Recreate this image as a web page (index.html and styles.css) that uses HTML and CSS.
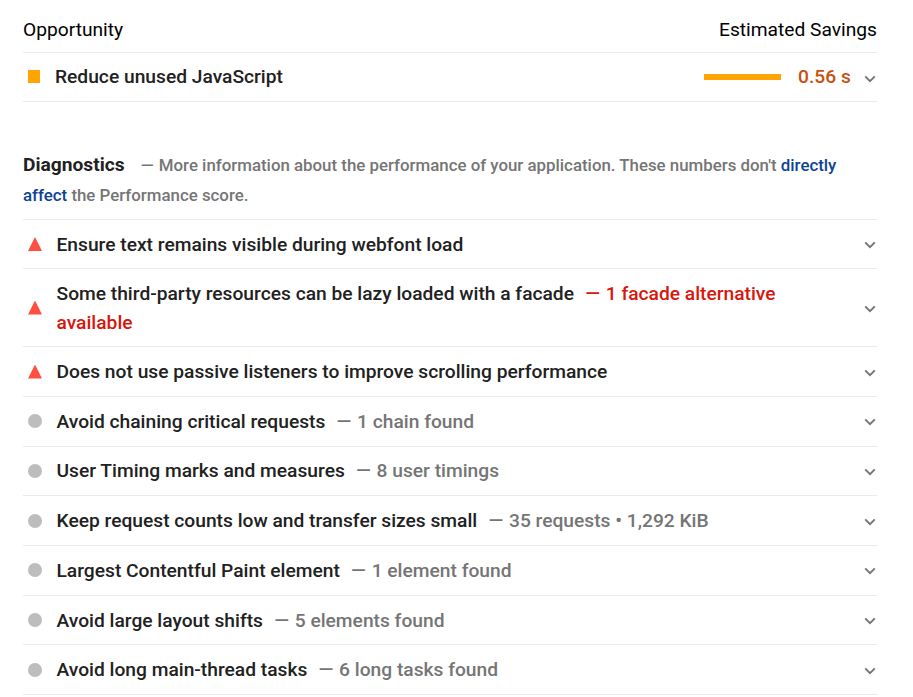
FILE: index.html
```html
<!DOCTYPE html>
<html lang="en">
<head>
<meta charset="utf-8">
<title>Performance audits</title>
<link rel="stylesheet" href="styles.css">
</head>
<body>
<svg class="defs"><symbol id="chev" viewBox="0 0 12 8"><path d="M1.2 1.4 6 6.2l4.8-4.8" fill="none" stroke="currentColor" stroke-width="1.9"/></symbol></svg>
<main class="report">
<div class="header"><span>Opportunity</span><span>Estimated Savings</span></div>
<div class="row opportunity"><i class="mark square"></i><div class="title"><span>Reduce unused JavaScript</span></div><span class="bar"></span><span class="saving">0.56 s</span><svg class="chev"><use href="#chev"/></svg></div>
<div class="intro"><div><span class="heading">Diagnostics</span><span class="desc"><span class="dash">—</span> More information about the performance of your application. These numbers don't <a>directly</a></span></div><div class="desc"><a>affect</a> the Performance score.</div></div>
<div class="row r1"><i class="mark triangle"></i><div class="title"><span>Ensure text remains visible during webfont load</span></div><svg class="chev"><use href="#chev"/></svg></div>
<div class="row r2"><i class="mark triangle"></i><div class="title"><span>Some third-party resources can be lazy loaded with a facade</span><span class="detail fail"><span class="dash">—</span> 1 facade alternative<br>available</span></div><svg class="chev"><use href="#chev"/></svg></div>
<div class="row r3"><i class="mark triangle"></i><div class="title"><span>Does not use passive listeners to improve scrolling performance</span></div><svg class="chev"><use href="#chev"/></svg></div>
<div class="row"><i class="mark circle"></i><div class="title"><span>Avoid chaining critical requests</span><span class="detail"><span class="dash">—</span> 1 chain found</span></div><svg class="chev"><use href="#chev"/></svg></div>
<div class="row timing"><i class="mark circle"></i><div class="title"><span>User Timing marks and measures</span><span class="detail"><span class="dash">—</span> 8 user timings</span></div><svg class="chev"><use href="#chev"/></svg></div>
<div class="row"><i class="mark circle"></i><div class="title"><span>Keep request counts low and transfer sizes small</span><span class="detail"><span class="dash">—</span> 35 requests • 1,292 KiB</span></div><svg class="chev"><use href="#chev"/></svg></div>
<div class="row"><i class="mark circle"></i><div class="title"><span>Largest Contentful Paint element</span><span class="detail"><span class="dash">—</span> 1 element found</span></div><svg class="chev"><use href="#chev"/></svg></div>
<div class="row"><i class="mark circle"></i><div class="title"><span>Avoid large layout shifts</span><span class="detail"><span class="dash">—</span> 5 elements found</span></div><svg class="chev"><use href="#chev"/></svg></div>
<div class="row"><i class="mark circle"></i><div class="title"><span>Avoid long main-thread tasks</span><span class="detail"><span class="dash">—</span> 6 long tasks found</span></div><svg class="chev"><use href="#chev"/></svg></div>
</main>
</body>
</html>
```
FILE: styles.css
```css
* { box-sizing: border-box; }
body { margin: 0; background: #fff; color: #212121; font-family: Roboto, sans-serif; overflow: hidden; }
.defs { display: none; }
.report { padding: 0 36px 0 23px; }
.header { height: 53px; padding-top: 7px; display: flex; justify-content: space-between; align-items: center; font-size: 19.2px; color: #000; border-bottom: 1px solid #ebebeb; }
.row { height: 49.7px; display: flex; align-items: center; border-bottom: 1px solid #ebebeb; font-size: 19.22px; font-weight: 500; line-height: 29px; }
.opportunity { height: 49px; }
.r1 { height: 49px; }
.r2 { height: 78px; }
.r3 { height: 50px; }
.title { flex: 1; white-space: nowrap; padding-top: 0.4px; }
.r1 .title, .r2 .title { padding-top: 1px; }
.r3 .title { padding-top: 0; }
.timing .title { padding: 0 0 0.8px; }
.opportunity .title, .opportunity .saving { padding: 0 0 1px; }
.mark { flex: none; margin: 0 14.5px 0 5px; }
.square { width: 12px; height: 13px; margin: 0 15px 1px 5px; background: #ffa400; }
.triangle { width: 14px; height: 14px; background: #ff4e42; clip-path: polygon(50% 0, 100% 100%, 0 100%); }
.circle { width: 14px; height: 14px; border-radius: 50%; background: #bdbdbd; }
.chev { flex: none; width: 12px; height: 8px; margin: 2px 1px 0 0; color: #757575; }
.opportunity .chev { margin-top: 3px; }
.bar { width: 77px; height: 6px; background: #ffa400; }
.saving { margin: 0 13.2px 0 17px; color: #c7500f; }
.detail { margin-left: 11.2px; color: #757575; }
.fail { color: #d9160c; }
.dash { margin-right: 1px; }
.intro { height: 118px; padding-top: 48px; border-bottom: 1px solid #ebebeb; line-height: 30px; white-space: nowrap; }
.intro > .desc { line-height: 29px; }
.heading { font-size: 19.2px; font-weight: 700; }
.desc { font-size: 16.85px; font-weight: 500; color: #757575; }
.heading + .desc { margin-left: 16px; }
a { color: #0c4394; }
```
